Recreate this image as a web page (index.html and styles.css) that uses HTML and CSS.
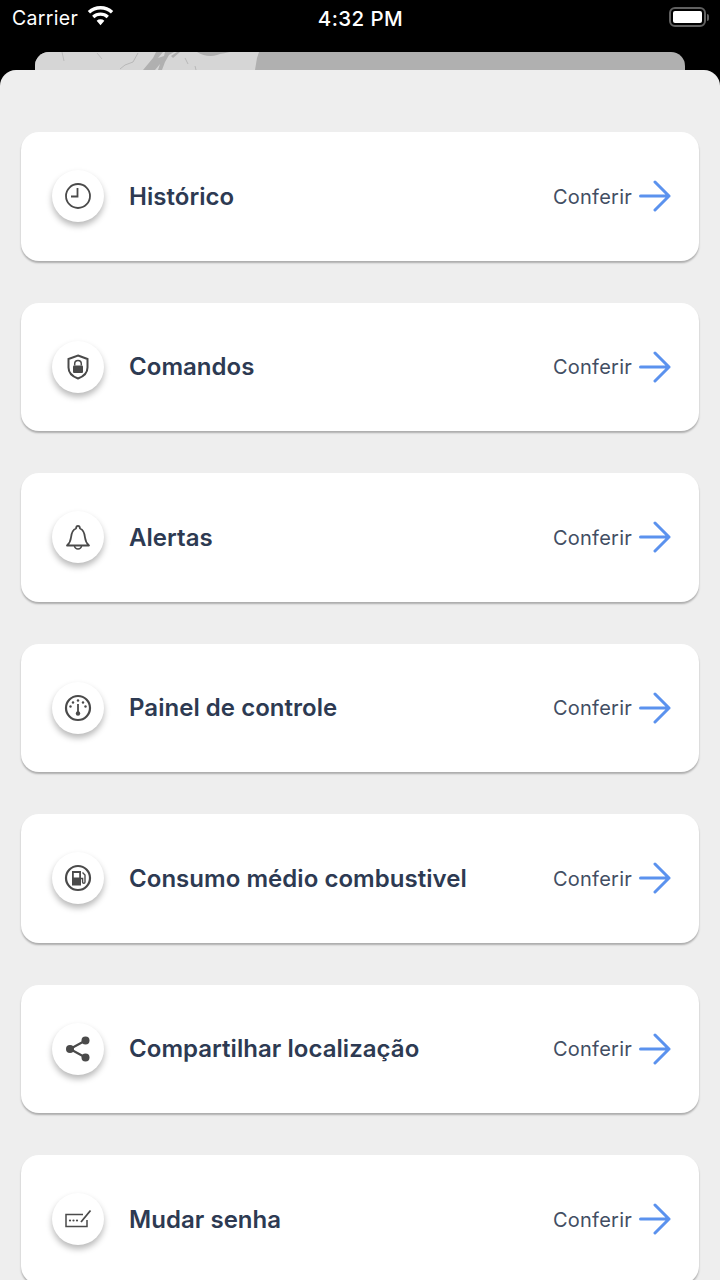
FILE: index.html
```html
<!DOCTYPE html>
<html lang="pt">
<head>
<meta charset="utf-8">
<title>Menu</title>
<link rel="stylesheet" href="styles.css">
</head>
<body>
<svg class="defs" width="0" height="0" aria-hidden="true">
  <defs>
    <symbol id="arrow" viewBox="0 0 34 32">
      <path d="M2.500 16H31M17 2l14 14-14 14" fill="none" stroke="#5b92ee" stroke-width="3" stroke-linecap="round" stroke-linejoin="round"/>
    </symbol>
  </defs>
</svg>
<div class="status">
  <div class="status-left">
    <span class="carrier">Carrier</span>
    <svg class="wifi" viewBox="0 0 28 20"><path d="M14 19.500l-4-4.600a6 6 0 0 1 8 0zM7.600 12.300L5.300 9.700a13 13 0 0 1 17.400 0l-2.300 2.600a9.600 9.600 0 0 0-12.800 0zM3.200 7.400L.8 4.700a20 20 0 0 1 26.400 0l-2.400 2.700a16.500 16.500 0 0 0-21.600 0z" fill="#fff"/></svg>
  </div>
  <span class="time">4:32 PM</span>
  <div class="battery"><span class="battery-body"><span class="battery-fill"></span></span><span class="battery-cap"></span></div>
</div>
<div class="map-peek">
  <svg class="map-land" viewBox="0 0 224 18" preserveAspectRatio="none">
    <path d="M0 0H224L222 6 220 18H0Z" fill="#d6d6d6"/>
    <path d="M27 0l2 9M62 1l5 6" fill="none" stroke="#bdbdbd" stroke-width="1"/>
    <path d="M85 17l5-4 8-3 5-9M150 6l3 6M161 18l-1-4" fill="none" stroke="#b8b8b8" stroke-width="1"/>
    <path d="M162 0c6 4 14 5 20 3 5-2 10-2 13-3z" fill="#b0b0b0"/>
    <path d="M108 18l10-12 3-6h7l-5 6 6-2 1-4h9l-5 3-4 7-3 8h-4l2-6-5 6zM136 4l6-4h3l-7 6z" fill="#b0b0b0"/>
  </svg>
</div>
<main class="sheet">
  <section class="card">
    <span class="badge"><svg class="icon" viewBox="0 0 28 28"><circle cx="14" cy="14" r="12" fill="none" stroke="#4a4a4a" stroke-width="1.800"/><path d="M13.500 6v8.500H7" fill="none" stroke="#4a4a4a" stroke-width="1.800"/></svg></span>
    <h2 class="label">Histórico</h2>
    <span class="check">Conferir</span>
    <svg class="arrow"><use href="#arrow"/></svg>
  </section>
  <section class="card">
    <span class="badge"><svg class="icon" viewBox="0 0 28 28"><path d="M14 2.500l9.500 3.500v8.500c0 5-4 9-9.500 11-5.500-2-9.500-6-9.500-11V6z" fill="none" stroke="#4a4a4a" stroke-width="2"/><path d="M10.700 12.500v-1.800a3.300 3.300 0 0 1 6.600 0v1.800" fill="none" stroke="#4a4a4a" stroke-width="1.500"/><rect x="9" y="12.500" width="10" height="7.500" rx="1" fill="#4a4a4a"/></svg></span>
    <h2 class="label">Comandos</h2>
    <span class="check">Conferir</span>
    <svg class="arrow"><use href="#arrow"/></svg>
  </section>
  <section class="card">
    <span class="badge"><svg class="icon" viewBox="0 0 28 28"><path d="M3 22.500c2.500-2 3.500-4 4-8 .5-5 2.500-8 5-9 .3-3.500 3.700-3.500 4 0 2.500 1 4.500 4 5 9 .5 4 1.500 6 4 8z" fill="none" stroke="#4a4a4a" stroke-width="1.800" stroke-linejoin="round"/><path d="M10.500 22.500a3.500 3.500 0 0 0 7 0" fill="none" stroke="#4a4a4a" stroke-width="1.600"/></svg></span>
    <h2 class="label">Alertas</h2>
    <span class="check">Conferir</span>
    <svg class="arrow"><use href="#arrow"/></svg>
  </section>
  <section class="card">
    <span class="badge"><svg class="icon" viewBox="0 0 28 28"><circle cx="14" cy="14" r="12" fill="none" stroke="#4a4a4a" stroke-width="2.200"/><path d="M14 10v9" stroke="#4a4a4a" stroke-width="1.800"/><circle cx="14" cy="19.500" r="2.200" fill="#4a4a4a"/><g fill="#4a4a4a"><circle cx="6.500" cy="12.500" r="1.200"/><circle cx="9" cy="8.500" r="1.200"/><circle cx="14" cy="6.500" r="1.200"/><circle cx="19" cy="8.500" r="1.200"/><circle cx="21.500" cy="12.500" r="1.200"/></g></svg></span>
    <h2 class="label">Painel de controle</h2>
    <span class="check">Conferir</span>
    <svg class="arrow"><use href="#arrow"/></svg>
  </section>
  <section class="card">
    <span class="badge"><svg class="icon" viewBox="0 0 28 28"><circle cx="14" cy="14" r="12" fill="none" stroke="#4a4a4a" stroke-width="2.200"/><path fill-rule="evenodd" d="M8 7h9v14.500H8zM9.800 9v4.500h5.400V9z" fill="#4a4a4a"/><path d="M18.500 8.500l2.500 2.500v7a1.200 1.200 0 0 1-2.400 0v-3.500h-1.600" fill="none" stroke="#4a4a4a" stroke-width="1.400"/></svg></span>
    <h2 class="label">Consumo médio combustivel</h2>
    <span class="check">Conferir</span>
    <svg class="arrow"><use href="#arrow"/></svg>
  </section>
  <section class="card">
    <span class="badge"><svg class="icon" viewBox="0 0 28 28"><path d="M21.500 5.500L6 14l15.500 8.500" fill="none" stroke="#4a4a4a" stroke-width="2.200"/><circle cx="21.500" cy="5.500" r="4" fill="#4a4a4a"/><circle cx="6" cy="14" r="4" fill="#4a4a4a"/><circle cx="21.500" cy="22.500" r="4" fill="#4a4a4a"/></svg></span>
    <h2 class="label">Compartilhar localização</h2>
    <span class="check">Conferir</span>
    <svg class="arrow"><use href="#arrow"/></svg>
  </section>
  <section class="card">
    <span class="badge"><svg class="icon" viewBox="0 0 28 28"><path d="M19 9.500H2v12h21V15" fill="none" stroke="#4a4a4a" stroke-width="1.500"/><path d="M17 17L26.500 5.500" fill="none" stroke="#4a4a4a" stroke-width="1.800"/><g fill="#4a4a4a"><circle cx="6" cy="15.500" r="1.100"/><circle cx="9.500" cy="15.500" r="1.100"/><circle cx="13" cy="15.500" r="1.100"/></g></svg></span>
    <h2 class="label">Mudar senha</h2>
    <span class="check">Conferir</span>
    <svg class="arrow"><use href="#arrow"/></svg>
  </section>
</main>
</body>
</html>
```
FILE: styles.css
```css
* { box-sizing: border-box; }
html, body { margin: 0; padding: 0; }
body {
  width: 720px;
  height: 1280px;
  overflow: hidden;
  background: #000;
  font-family: Inter, "Liberation Sans", sans-serif;
}
.defs { display: block; height: 0; }
.status {
  height: 52px;
  padding: 0 11px 16px 12px;
  display: grid;
  grid-template-columns: 1fr auto 1fr;
  align-items: center;
  color: #fff;
}
.status-left { display: flex; align-items: center; gap: 9px; }
.carrier { font-size: 19.500px; letter-spacing: 0.3px; }
.wifi { width: 27px; height: 20px; margin-top: -4px; }
.time { font-size: 20.500px; font-weight: 500; letter-spacing: 0.4px; }
.battery { display: flex; align-items: center; justify-self: end; gap: 1px; margin-top: -2px; }
.battery-body {
  width: 37px;
  height: 20px;
  padding: 2px;
  border: 2px solid #606060;
  border-radius: 6px;
  display: block;
}
.battery-fill { display: block; height: 100%; background: #fff; border-radius: 2px; }
.battery-cap { width: 2px; height: 7px; background: #606060; border-radius: 0 2px 2px 0; }
.map-peek {
  height: 18px;
  margin: 0 35px;
  background: #b0b0b0;
  border-radius: 14px 14px 0 0;
  overflow: hidden;
}
.map-land { display: block; width: 224px; height: 18px; }
.sheet {
  height: 1210px;
  padding: 62px 21px 0;
  background: #eeeeee;
  border-radius: 16px 16px 0 0;
  display: flex;
  flex-direction: column;
  gap: 42px;
  overflow: hidden;
}
.card {
  flex: 0 0 128.500px;
  padding: 0 27px 0 31px;
  display: flex;
  align-items: center;
  background: #fff;
  border-radius: 18px;
  box-shadow: 0 2px 2px rgba(0, 0, 0, 0.28);
}
.badge {
  flex: none;
  width: 52px;
  height: 52px;
  margin-right: 25px;
  display: flex;
  align-items: center;
  justify-content: center;
  background: #fff;
  border-radius: 50%;
  box-shadow: 0 4px 6px rgba(0, 0, 0, 0.28);
}
.icon { width: 28px; height: 28px; }
.label {
  flex: 1;
  margin: 0;
  font-size: 24px;
  font-weight: 600;
  letter-spacing: 0.04px;
  color: #2d3a52;
}
.check {
  padding-top: 1px;
  font-size: 20px;
  letter-spacing: 0.25px;
  color: #424e63;
  margin-right: 6px;
}
.arrow { width: 34px; height: 32px; flex: none; }
```
